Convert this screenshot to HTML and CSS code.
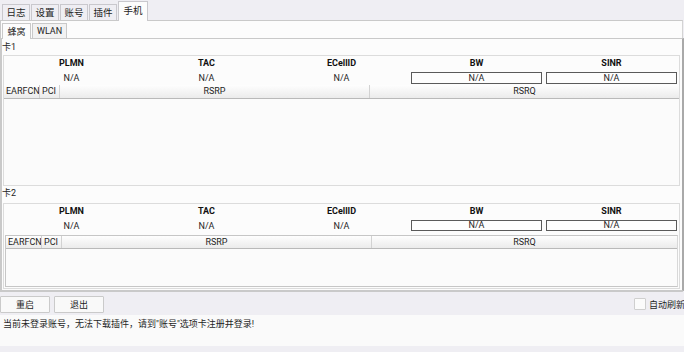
FILE: index.html
```html
<!DOCTYPE html>
<html lang="zh">
<head>
<meta charset="utf-8">
<title>手机</title>
<link rel="stylesheet" href="styles.css">
</head>
<body>
<div class="app">
  <div class="tabbar">
    <div class="tab">日志</div>
    <div class="tab">设置</div>
    <div class="tab">账号</div>
    <div class="tab">插件</div>
    <div class="tab active">手机</div>
  </div>
  <div class="pane">
    <div class="subtabbar">
      <div class="subtab active">蜂窝</div>
      <div class="subtab wide">WLAN</div>
    </div>
    <div class="subpane">
      <div class="card-label">卡1</div>
      <div class="group g1">
        <div class="info">
          <div class="h">PLMN</div>
          <div class="h">TAC</div>
          <div class="h">ECellID</div>
          <div class="h">BW</div>
          <div class="h">SINR</div>
          <div class="v">N/A</div>
          <div class="v">N/A</div>
          <div class="v">N/A</div>
          <div class="v"><span class="box">N/A</span></div>
          <div class="v"><span class="box">N/A</span></div>
        </div>
        <div class="table">
          <div class="thead">
            <div class="th c-earfcn">EARFCN</div>
            <div class="th c-pci">PCI</div>
            <div class="th c-rsrp">RSRP</div>
            <div class="th c-rsrq">RSRQ</div>
          </div>
          <div class="tbody"></div>
        </div>
      </div>
      <div class="card-label l2">卡2</div>
      <div class="group g2">
        <div class="info">
          <div class="h">PLMN</div>
          <div class="h">TAC</div>
          <div class="h">ECellID</div>
          <div class="h">BW</div>
          <div class="h">SINR</div>
          <div class="v">N/A</div>
          <div class="v">N/A</div>
          <div class="v">N/A</div>
          <div class="v"><span class="box">N/A</span></div>
          <div class="v"><span class="box">N/A</span></div>
        </div>
        <div class="table framed">
          <div class="thead">
            <div class="th c-earfcn">EARFCN</div>
            <div class="th c-pci">PCI</div>
            <div class="th c-rsrp">RSRP</div>
            <div class="th c-rsrq">RSRQ</div>
          </div>
          <div class="tbody"></div>
        </div>
      </div>
    </div>
  </div>
  <div class="controls">
    <button class="btn">重启</button>
    <button class="btn">退出</button>
    <div class="spacer"></div>
    <label class="check"><span class="checkbox"></span>自动刷新</label>
  </div>
  <div class="message">当前未登录账号，无法下载插件，请到"账号"选项卡注册并登录!</div>
</div>
</body>
</html>
```

FILE: styles.css
```css
html, body {
  margin: 0;
  padding: 0;
}
body {
  background: #efeef3;
  font-family: Roboto, "Noto Sans CJK SC", sans-serif;
  font-size: 9px;
  color: #1e1e1e;
}
.app {
  width: 684px;
  height: 352px;
  display: flex;
  flex-direction: column;
  overflow: hidden;
}
.tabbar {
  height: 20px;
  display: flex;
  align-items: flex-end;
  padding-left: 2px;
  gap: 1px;
}
.tab {
  width: 28px;
  height: 16px;
  box-sizing: border-box;
  border: 1px solid #c9c8cd;
  border-bottom: none;
  background: #efeef3;
  display: flex;
  align-items: center;
  justify-content: center;
  line-height: 1;
  font-size: 9.5px;
}
.tab.active {
  width: 30px;
  height: 20px;
  margin-left: 0;
  margin-bottom: -1px;
  background: #fcfcfc;
  position: relative;
  z-index: 1;
  padding-bottom: 2px;
}
.pane {
  height: 272px;
  box-sizing: border-box;
  border: 1px solid #c9c9c9;
  border-right-color: #d4d4d4;
  width: 683px;
  background: #fcfcfc;
  display: flex;
  flex-direction: column;
}
.subtabbar {
  height: 17px;
  display: flex;
  align-items: flex-end;
  padding-left: 1px;
  gap: 1px;
}
.subtab {
  width: 29px;
  height: 15px;
  box-sizing: border-box;
  border: 1px solid #c9c9c9;
  border-bottom: none;
  background: #f2f2f2;
  display: flex;
  align-items: center;
  justify-content: center;
}
.subtab.active {
  background: #fcfcfc;
  height: 16px;
  margin-bottom: -1px;
  position: relative;
  z-index: 1;
}
.subtab.wide {
  width: 35px;
}
.subpane {
  flex: 1;
  box-sizing: border-box;
  border: 1px solid #c9c9c9;
  border-right: 2px solid #a9a9a9;
  margin-right: -2px;
  margin-left: 0;
  background: #fcfcfc;
  display: flex;
  flex-direction: column;
  padding: 0 1px 0 1px;
}
.card-label {
  height: 16px;
  line-height: 16px;
  padding-left: 0;
  margin-left: -1px;
}
.card-label.l2 {
  height: 17px;
  line-height: 14px;
}
.group {
  box-sizing: border-box;
  border: 1px solid #dcdcdc;
  margin-right: 1px;
  display: flex;
  flex-direction: column;
}
.g1 {
  height: 131px;
}
.g2 {
  height: 86px;
}
.info {
  display: grid;
  grid-template-columns: repeat(5, 1fr);
  grid-template-rows: 15px 14px;
}
.g2 .info {
  grid-template-rows: 15px 16px;
}
.h {
  font-weight: bold;
  text-align: center;
  line-height: 15px;
  color: #111;
}
.v {
  text-align: center;
  line-height: 14px;
  display: flex;
  justify-content: center;
  align-items: flex-start;
  padding: 0 2px;
}
.box {
  display: block;
  width: 100%;
  box-sizing: border-box;
  border: 1px solid #5a5a5a;
  background: #fdfdfd;
  height: 12px;
  line-height: 10px;
  margin-top: 1px;
}
.g2 .box {
  height: 11px;
  line-height: 9px;
}
.table {
  flex: 1;
  display: flex;
  flex-direction: column;
  background: #fbfbfb;
}
.table.framed {
  border: 1px solid #c6c6c6;
  border-right-color: #d8d8d8;
  margin: 0 1px 1px 1px;
}
.thead {
  height: 14px;
  box-sizing: border-box;
  display: flex;
  background: linear-gradient(#fefefe, #ebebeb);
  border-bottom: 1px solid #b9b9b9;
}
.framed .thead {
  height: 13px;
}
.th {
  box-sizing: border-box;
  border-right: 1px solid #d2d2d2;
  line-height: 13px;
  white-space: nowrap;
  overflow: hidden;
}
.framed .th {
  line-height: 12px;
}
.c-earfcn {
  width: 36px;
  padding-left: 2px;
}
.c-pci {
  width: 20px;
  padding-left: 2px;
}
.c-rsrp {
  width: 310px;
  text-align: center;
}
.c-rsrq {
  flex: 1;
  text-align: center;
  border-right: none;
}
.tbody {
  flex: 1;
}
.controls {
  height: 23px;
  display: flex;
  align-items: center;
  gap: 4px;
  padding-top: 1px;
  box-sizing: border-box;
}
.btn {
  width: 50px;
  height: 17px;
  box-sizing: border-box;
  margin: 0;
  padding: 0;
  border: 1px solid #cacaca;
  border-radius: 1px;
  background: #f9f9f9;
  font-family: Roboto, "Noto Sans CJK SC", sans-serif;
  font-size: 9px;
  color: #1e1e1e;
}
.spacer {
  flex: 1;
}
.check {
  display: flex;
  align-items: center;
  gap: 3px;
  margin-right: -1px;
}
.checkbox {
  width: 12px;
  height: 12px;
  box-sizing: border-box;
  border: 1px solid #cfcfcf;
  background: #fbfbfb;
  border-radius: 1px;
}
.message {
  height: 31px;
  background: #fafafa;
  padding-left: 3px;
  line-height: 18px;
  box-sizing: border-box;
  padding-top: 0;
}
```
